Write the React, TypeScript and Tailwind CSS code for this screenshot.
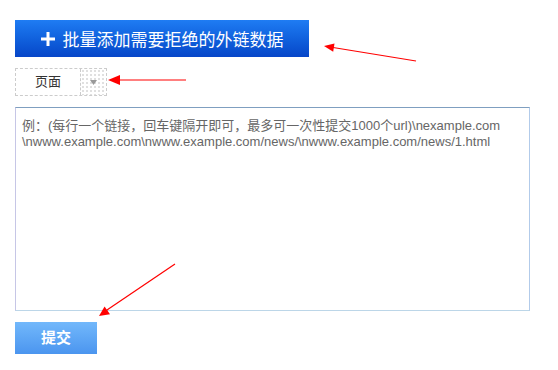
const placeholder =
  "例：(每行一个链接，回车键隔开即可，最多可一次性提交1000个url)\\nexample.com\n" +
  "\\nwww.example.com\\nwww.example.com/news/\\nwww.example.com/news/1.html";

function Arrows() {
  // red annotation arrows drawn over the form
  return (
    <svg className="pointer-events-none absolute left-0 top-0" width="558" height="370">
      <g stroke="#ff0000" strokeWidth="1.2" fill="#ff0000">
        <line x1="416" y1="61" x2="330" y2="47" />
        <polygon points="324,46 334.5,43.5 333.2,51.8" stroke="none" />
        <line x1="186" y1="80" x2="116" y2="80" />
        <polygon points="108,80 120,75 120,85" stroke="none" />
        <line x1="175" y1="264" x2="104" y2="312" />
        <polygon points="99,316 110,314.2 104.6,306.4" stroke="none" />
      </g>
    </svg>
  );
}

export default function App() {
  return (
    <div className="relative h-[370px] w-[558px] bg-white pl-[15px] pt-[20px] font-['Liberation_Sans','Noto_Sans_CJK_SC',sans-serif]">
      <button className="flex h-[37px] w-[294px] items-center justify-center gap-[8px] bg-linear-to-b from-[#1f7cf3] to-[#0846c8] text-[17px] text-white">
        <svg width="14" height="14" viewBox="0 0 14 14">
          <rect x="5.5" y="0" width="3" height="14" fill="white" />
          <rect x="0" y="5.5" width="14" height="3" fill="white" />
        </svg>
        <span className="font-['Noto_Sans_CJK_SC',sans-serif] leading-none">批量添加需要拒绝的外链数据</span>
      </button>

      <div className="mt-[11px] flex h-[28px] w-[92px] border border-dashed border-[#cccccc]">
        <div className="flex w-[64px] items-center justify-center text-[13px] text-[#333]">页面</div>
        <div className="flex flex-1 items-center justify-center border-l border-dashed border-[#cccccc] bg-[radial-gradient(#e0e0e0_0.8px,transparent_0.9px)] bg-[length:4px_4px]">
          <svg width="7" height="5" viewBox="0 0 7 5">
            <polygon points="0,0 7,0 3.5,5" fill="#999" />
          </svg>
        </div>
      </div>

      <textarea
        placeholder={placeholder}
        className="mt-[11px] block h-[204px] w-[515px] resize-none border border-t-[#7f9fc0] border-l-[#c6c6e6] border-r-[#b2cbea] border-b-[#bcd6e8] px-[6px] pt-[10px] text-[13px] leading-[16px] text-[#666] outline-none placeholder:text-[#666]"
      />

      <button className="mt-[11px] flex h-[32px] w-[82px] items-center justify-center bg-linear-to-b from-[#72b8fb] to-[#4b95ef] text-[15px] font-bold text-white">
        提交
      </button>

      <Arrows />
    </div>
  );
}
